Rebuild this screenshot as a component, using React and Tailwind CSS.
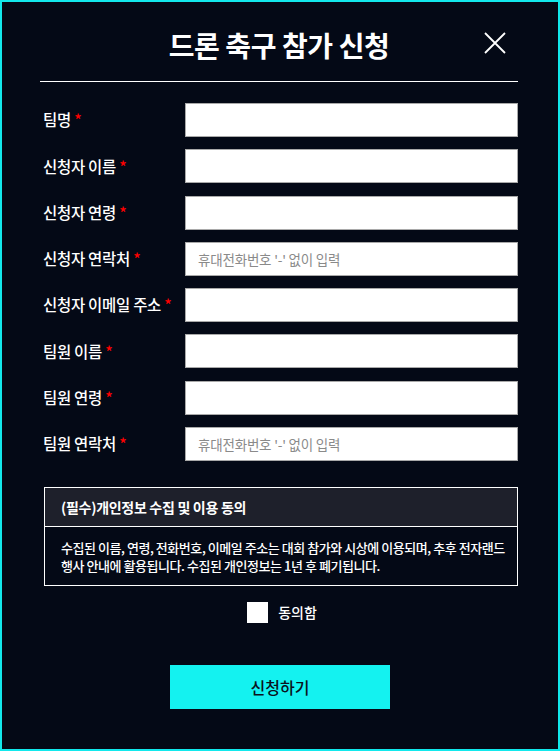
import React from "react";

const fields = [
  { label: "팀명" },
  { label: "신청자 이름" },
  { label: "신청자 연령" },
  { label: "신청자 연락처", ph: "휴대전화번호 '-' 없이 입력" },
  { label: "신청자 이메일 주소" },
  { label: "팀원 이름" },
  { label: "팀원 연령" },
  { label: "팀원 연락처", ph: "휴대전화번호 '-' 없이 입력" },
];

export default function App() {
  return (
    <div
      className="w-[560px] h-[751px] border-2 border-[#12e8ec] bg-[#040916] text-white flex flex-col pl-[38px] pr-[40px] pt-[22px]"
      style={{ fontFamily: '"Noto Sans CJK KR", "Noto Sans", sans-serif' }}
    >
      <div className="relative h-[42px] flex items-center justify-center">
        <h1 className="text-[28px] font-bold leading-none tracking-[-0.4px]">드론 축구 참가 신청</h1>
        <button className="absolute right-[11px] top-[7px] w-[24px] h-[24px]">
          <svg viewBox="0 0 24 24" width="24" height="24" fill="none" stroke="white" strokeWidth="1.8">
            <path d="M2 2 L22 22 M22 2 L2 22" />
          </svg>
        </button>
      </div>
      <div className="mt-[15px] h-px bg-white" />
      <div className="mt-[21px] flex flex-col gap-[12.3px]">
        {fields.map((f) => (
          <div key={f.label} className="flex items-center">
            <div className="w-[145px] pl-[3px] text-[15.5px] font-medium leading-none tracking-[-0.3px]">
              {f.label} <span className="text-[#ff0000]">*</span>
            </div>
            <div className="flex-1 h-[34px] bg-white border border-[#a9a9a9] flex items-center pl-[12px]">
              {f.ph && <span className="text-[13.5px] text-[#8a8a8a] tracking-[-0.2px]">{f.ph}</span>}
            </div>
          </div>
        ))}
      </div>
      <div className="mt-[26px] ml-[4px] border border-white">
        <div className="h-[39px] bg-[#1e202b] flex items-center pl-[16px] border-b border-white text-[14px] font-bold tracking-[-0.3px]">
          (필수)개인정보 수집 및 이용 동의
        </div>
        <div className="pl-[16px] pr-[4px] pt-[12px] pb-[10px] text-[13px] leading-[18px] font-medium tracking-[-0.45px] break-keep">
          수집된 이름, 연령, 전화번호, 이메일 주소는 대회 참가와 시상에 이용되며, 추후 전자랜드 행사 안내에 활용됩니다. 수집된 개인정보는 1년 후 폐기됩니다.
        </div>
      </div>
      <div className="mt-[16px] flex items-center justify-center gap-[10px] pl-[6px]">
        <div className="w-[21px] h-[21px] bg-white" />
        <span className="text-[14px] font-medium">동의함</span>
      </div>
      <div className="mt-[42px] flex justify-center pl-[2px]">
        <button className="w-[220px] h-[44px] bg-[#14f2f0] text-[#0b1220] text-[16px] font-medium">
          신청하기
        </button>
      </div>
    </div>
  );
}
